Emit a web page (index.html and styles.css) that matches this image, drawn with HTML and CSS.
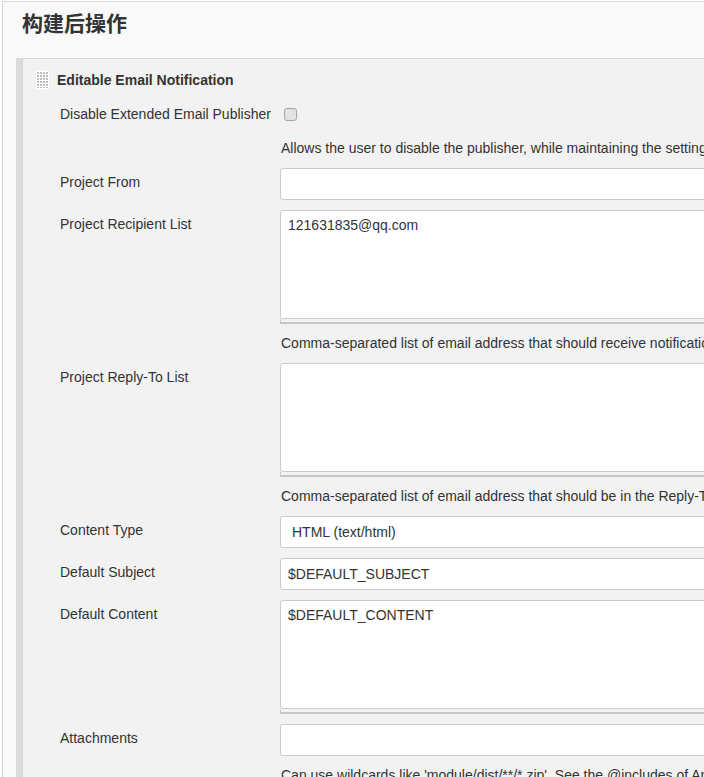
FILE: index.html
```html
<!DOCTYPE html>
<html lang="zh-CN">

<head>
    <meta charset="UTF-8">
    <meta name="viewport" content="width=device-width, initial-scale=1.0">
    <title>构建后操作</title>

    <link rel="stylesheet" href="styles.css">
</head>

<body>

    <div class="page">
        <div class="section-head">
            <h2 class="section-title">构建后操作</h2>
        </div>

        <div class="panel">
            <div class="panel-inner">
                <div class="panel-head">
                    <svg class="drag-handle" width="13" height="18" viewBox="0 0 13 18">
                        <rect width="13" height="18" fill="#fff"/>
                        <g fill="#bdbdbd">
                            <rect x="1" y="1" width="2" height="2"/><rect x="4" y="1" width="2" height="2"/><rect x="7" y="1" width="2" height="2"/><rect x="10" y="1" width="2" height="2"/>
                            <rect x="1" y="4" width="2" height="2"/><rect x="4" y="4" width="2" height="2"/><rect x="7" y="4" width="2" height="2"/><rect x="10" y="4" width="2" height="2"/>
                            <rect x="1" y="7" width="2" height="2"/><rect x="4" y="7" width="2" height="2"/><rect x="7" y="7" width="2" height="2"/><rect x="10" y="7" width="2" height="2"/>
                            <rect x="1" y="10" width="2" height="2"/><rect x="4" y="10" width="2" height="2"/><rect x="7" y="10" width="2" height="2"/><rect x="10" y="10" width="2" height="2"/>
                            <rect x="1" y="13" width="2" height="2"/><rect x="4" y="13" width="2" height="2"/><rect x="7" y="13" width="2" height="2"/><rect x="10" y="13" width="2" height="2"/>
                            <rect x="1" y="16" width="2" height="1"/><rect x="4" y="16" width="2" height="1"/><rect x="7" y="16" width="2" height="1"/><rect x="10" y="16" width="2" height="1"/>
                        </g>
                    </svg>
                    <span class="panel-title">Editable Email Notification</span>
                </div>

                <div class="entries">
                    <div class="row row-first row-check">
                        <label class="label">Disable Extended Email Publisher</label>
                        <div class="field"><input type="checkbox" class="checkbox"></div>
                    </div>
                    <div class="help">Allows the user to disable the publisher, while maintaining the settings</div>

                    <div class="row">
                        <label class="label">Project From</label>
                        <div class="field"><input type="text" class="text-input"></div>
                    </div>

                    <div class="row">
                        <label class="label">Project Recipient List</label>
                        <div class="field">
                            <textarea class="text-area">121631835@qq.com</textarea>
                            <div class="resize-handle"></div>
                        </div>
                    </div>
                    <div class="help">Comma-separated list of email address that should receive notifications for this project.</div>

                    <div class="row">
                        <label class="label">Project Reply-To List</label>
                        <div class="field">
                            <textarea class="text-area"></textarea>
                            <div class="resize-handle"></div>
                        </div>
                    </div>
                    <div class="help">Comma-separated list of email address that should be in the Reply-To header for this project.</div>

                    <div class="row">
                        <label class="label">Content Type</label>
                        <div class="field">
                            <select class="select">
                                <option>HTML (text/html)</option>
                                <option>Plain Text (text/plain)</option>
                            </select>
                        </div>
                    </div>

                    <div class="row">
                        <label class="label">Default Subject</label>
                        <div class="field"><input type="text" class="text-input" value="$DEFAULT_SUBJECT"></div>
                    </div>

                    <div class="row">
                        <label class="label">Default Content</label>
                        <div class="field">
                            <textarea class="text-area">$DEFAULT_CONTENT</textarea>
                            <div class="resize-handle"></div>
                        </div>
                    </div>

                    <div class="row">
                        <label class="label">Attachments</label>
                        <div class="field"><input type="text" class="text-input"></div>
                    </div>
                    <div class="help">Can use wildcards like 'module/dist/**/*.zip'. See the @includes of Ant fileset for the exact format.</div>
                </div>
            </div>
        </div>
    </div>

</body>

</html>
```

FILE: styles.css
```css
body {
    margin: 0;
    overflow: hidden;
    background-color: #fff;
    font-family: "Liberation Sans", Arial, sans-serif;
    font-size: 14px;
    color: #333;
}

.page {
    width: 1200px;
    height: 800px;
    margin: 1px 0 0 2px;
    border-top: 1px solid #dedede;
    border-left: 1px solid #d2d2d2;
    background-color: #f9f9f9;
}

.section-head {
    height: 56px;
    padding-left: 19px;
}

.section-title {
    margin: 0;
    padding-top: 5px;
    font-family: "Noto Sans CJK SC", "Liberation Sans", sans-serif;
    font-size: 21px;
    line-height: 30px;
    font-weight: bold;
    color: #333;
}

.panel {
    margin-left: 13px;
    border-left: 6px solid #dcdcdc;
}

.panel-inner {
    border-left: 1px solid #d6d6d6;
    border-top: 1px solid #d6d6d6;
    background-color: #f2f2f2;
    height: 760px;
}

.panel-head {
    display: flex;
    align-items: center;
    padding: 12px 0 0 13px;
    height: 18px;
}

.drag-handle {
    display: block;
    margin-right: 8px;
}

.panel-title {
    font-weight: bold;
    font-size: 14px;
}

.entries {
    padding-left: 37px;
}

.row {
    display: grid;
    grid-template-columns: 220px 800px;
    margin-top: 10px;
}

.row-first {
    margin-top: 11px;
}

.row-check {
    height: 29px;
}

.label {
    padding-top: 4px;
    line-height: 20px;
}

.help {
    margin: 9px 0 0 221px;
    line-height: 20px;
    white-space: nowrap;
}

.checkbox {
    appearance: none;
    display: block;
    width: 13px;
    height: 13px;
    margin: 8px 0 0 4px;
    border: 1px solid #a6a6a6;
    border-radius: 3px;
    background-color: #e2e2e2;
}

.text-input,
.text-area,
.select {
    display: block;
    box-sizing: border-box;
    width: 100%;
    border: 1px solid #cbcbcb;
    border-radius: 3px;
    background-color: #fff;
    font-family: "Liberation Sans", Arial, sans-serif;
    font-size: 14px;
    color: #333;
    outline: none;
}

.text-input {
    height: 32px;
    padding: 0 7px;
}

.select {
    appearance: none;
    height: 32px;
    padding: 0 11px;
}

.text-area {
    height: 109px;
    padding: 6px 7px;
    line-height: 17px;
    resize: none;
}

.resize-handle {
    height: 3px;
    border-left: 1px solid #cbcbcb;
    border-bottom: 2px solid #c6c6c6;
}
```
